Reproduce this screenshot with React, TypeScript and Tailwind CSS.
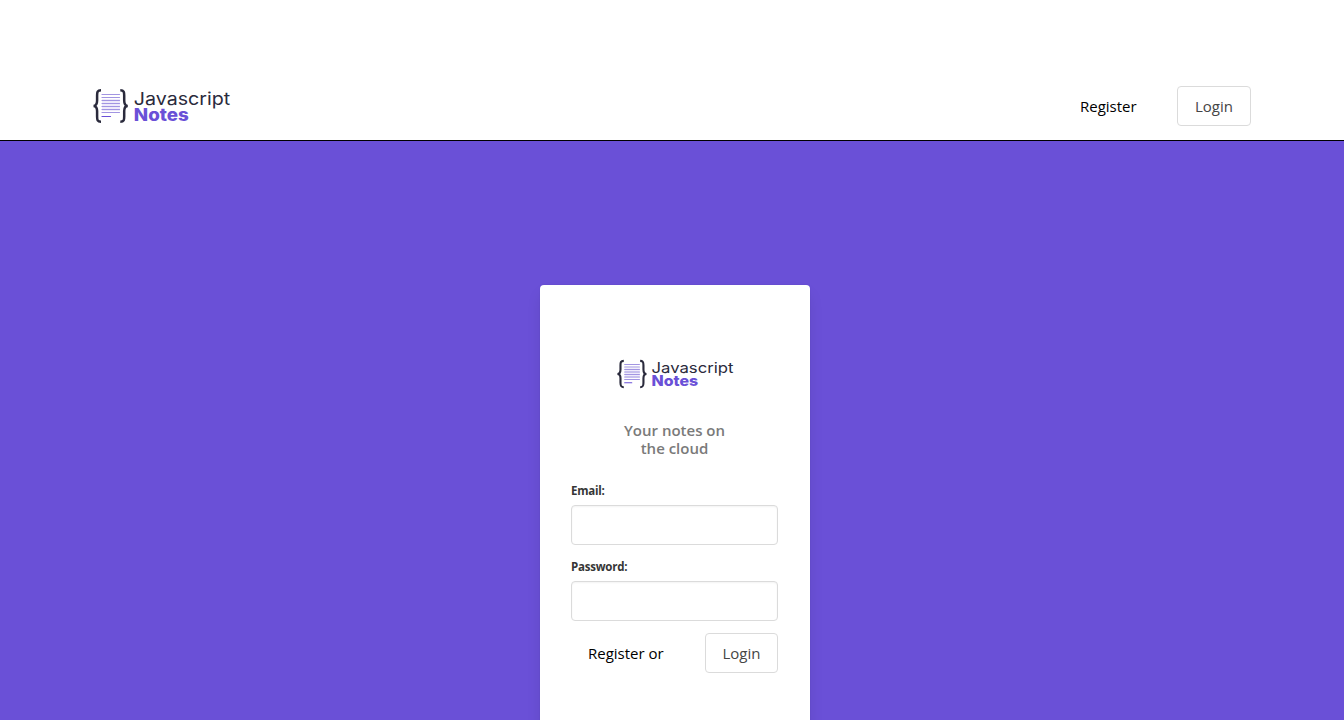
function Logo({ className }: { className: string }) {
  const lines = [6.5, 9.5, 12.5, 15.5, 18.5, 21.5, 24.5];
  return (
    <svg className={`overflow-visible ${className}`} viewBox="0 0 138 36" preserveAspectRatio="none" role="img" aria-label="Javascript Notes">
      <g fill="none" stroke="#2a2a3c" strokeWidth="2.5">
        <path d="M8 2.2C4.3 2.2 4.1 4.3 4.1 7.5V12.5C4.1 15.5 3.1 17.9 0.5 17.9C3.1 17.9 4.1 20.1 4.1 23.1V28.5C4.1 31.7 4.3 33.8 8 33.8" />
        <path d="M27.3 2.2C31 2.2 31.2 4.3 31.2 7.5V12.5C31.2 15.5 32.2 17.9 34.8 17.9C32.2 17.9 31.2 20.1 31.2 23.1V28.5C31.2 31.7 31 33.8 27.3 33.8" />
      </g>
      <rect x="9" y="11" width="18" height="12" fill="#eeeafb" />
      <g stroke="#a295e2" strokeWidth="1.2" strokeLinecap="round">
        {lines.map((y) => (
          <path key={y} d={`M9 ${y}H26.5`} />
        ))}
        <path d="M9 28.5H17.5" stroke="#6a50d7" />
      </g>
      <text x="40.8" y="16.8" fill="#2a2a3c" fontSize="17.5" textLength="96.5" lengthAdjust="spacingAndGlyphs" className="font-['Inter',sans-serif]">Javascript</text>
      <text x="40.8" y="33" fill="#6a50d7" fontSize="17.5" fontWeight="800" textLength="55" lengthAdjust="spacingAndGlyphs" className="font-['Inter',sans-serif]">Notes</text>
    </svg>
  );
}

function Field({ label, type }: { label: string; type: string }) {
  return (
    <label className="mb-3 block">
      <span className="mb-[5px] block h-[19px] text-[11.5px] leading-[19px] font-bold tracking-[-0.22px] text-[#363636]">{label}</span>
      <input type={type} className="block h-10 w-full rounded border border-[#dbdbdb] bg-white px-3 shadow-[inset_0_1px_2px_rgba(10,10,10,0.05)] outline-none" />
    </label>
  );
}

function LoginButton({ className }: { className: string }) {
  return (
    <button type="button" className={`h-10 rounded border border-[#dbdbdb] bg-white pt-px text-center text-[15px] text-[#454545] ${className}`}>
      Login
    </button>
  );
}

export default function App() {
  return (
    <div className="h-[720px] overflow-hidden bg-white font-['Open_Sans','Noto_Sans',sans-serif]">
      <header className="flex h-[141px] items-start justify-between border-b border-black px-[93px] pt-[86px]">
        <Logo className="mt-[2px] h-9 w-[138px]" />
        <nav className="flex items-center">
          <a className="mr-[39px] w-[58px] text-[15px] leading-10 whitespace-nowrap text-black">Register</a>
          <LoginButton className="w-[74px]" />
        </nav>
      </header>
      <main className="flex h-[579px] items-start bg-[#6a50d7] pt-36 pl-[540px]">
        <section className="h-[500px] w-[270px] rounded bg-white pt-[74px] pr-8 pl-[31px] shadow-[0_8px_16px_-2px_rgba(10,10,10,0.1),0_0_0_1px_rgba(10,10,10,0.02)]">
          <Logo className="ml-[46px] h-[30px] w-[117px]" />
          <h1 className="mt-8 text-center text-[15px] leading-[18px] font-semibold text-[#7a7a7a]">
            Your notes on
            <br />
            the cloud
          </h1>
          <form className="mt-6">
            <Field label="Email:" type="email" />
            <Field label="Password:" type="password" />
            <div className="flex items-center justify-between">
              <a className="ml-[17px] text-[15px] whitespace-nowrap text-black">Register or</a>
              <LoginButton className="w-[73px]" />
            </div>
          </form>
        </section>
      </main>
    </div>
  );
}
